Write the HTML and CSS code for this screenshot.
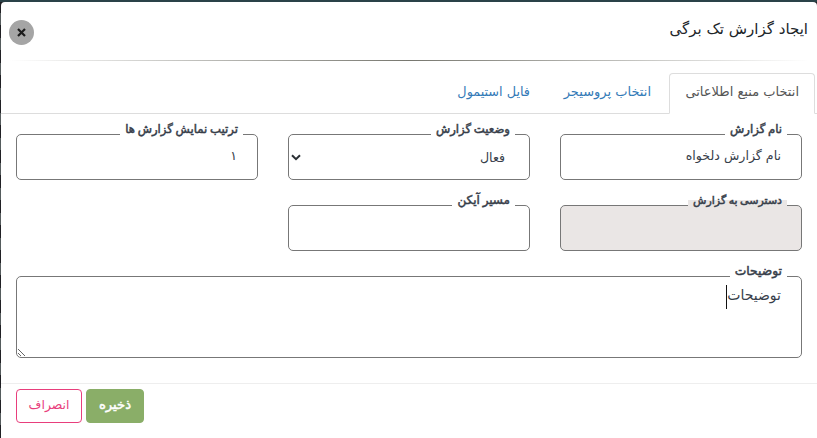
FILE: index.html
```html
<!DOCTYPE html>
<html lang="fa" dir="rtl">
<head>
    <meta charset="utf-8">
    <title>ایجاد گزارش تک برگی</title>
    <link rel="stylesheet" href="styles.css">
</head>
<body>
    <div class="modal">
        <div class="modal-header">
            <h4 class="modal-title">ایجاد گزارش تک برگی</h4>
            <button type="button" class="close" aria-label="بستن">
                <svg width="9" height="9" viewBox="0 0 9 9"><path d="M1 1L8 8M8 1L1 8" stroke="#1b1b1b" stroke-width="2.2"/></svg>
            </button>
        </div>
        <div class="line"></div>
        <ul class="tabs">
            <li><a class="tab active">انتخاب منبع اطلاعاتی</a></li>
            <li><a class="tab procedure">انتخاب پروسیجر</a></li>
            <li><a class="tab file">فایل استیمول</a></li>
        </ul>
        <form class="form">
            <div class="field">
                <input type="text" id="name" value="نام گزارش دلخواه">
                <label for="name">نام گزارش</label>
            </div>
            <div class="field">
                <select id="status">
                    <option>فعال</option>
                </select>
                <svg class="arrow" width="10" height="7" viewBox="0 0 10 7"><path d="M1 1.2L5 5.2L9 1.2" fill="none" stroke="#2b3035" stroke-width="2"/></svg>
                <label for="status">وضعیت گزارش</label>
            </div>
            <div class="field">
                <input type="text" id="order" value="۱">
                <label for="order">ترتیب نمایش گزارش ها</label>
            </div>
            <div class="field">
                <input type="text" id="access" class="disabled" readonly>
                <label for="access" class="label-disabled">دسترسی به گزارش</label>
            </div>
            <div class="field">
                <input type="text" id="icon">
                <label for="icon" class="label-icon">مسیر آیکن</label>
            </div>
            <div class="field wide">
                <textarea id="desc">توضیحات</textarea>
                <span class="caret"></span>
                <label for="desc" class="label-desc">توضیحات</label>
            </div>
        </form>
        <div class="modal-footer">
            <button type="button" class="btn save">ذخیره</button>
            <button type="button" class="btn cancel">انصراف</button>
        </div>
    </div>
</body>
</html>
```

FILE: styles.css
```css
* { box-sizing: border-box; }
body { margin: 0; padding: 2px 0 0 1px; height: 438px; overflow: hidden; background: linear-gradient(#2a4248 2px, transparent 2px), repeating-linear-gradient(#202024 0 13px, #555c5d 13px 25px); font-family: "DejaVu Sans", sans-serif; color: #373e4a; }
.modal { height: 436px; background: #fff; border-radius: 4px 4px 0 0; }

.modal-header { height: 58px; padding: 0 9px 0 8px; display: flex; justify-content: space-between; align-items: flex-start; }
.modal-title { margin: 14px 0 0; font-size: 15px; line-height: 26px; font-weight: normal; color: #212529; }
.close { width: 25px; height: 25px; margin-top: 18px; padding: 0; border: 0; border-radius: 50%; background: #a5a5a5; display: flex; align-items: center; justify-content: center; }
.line { height: 1px; background: linear-gradient(to right, #fff 1%, #77776f 50%, #fff 99%); }

.tabs { list-style: none; height: 41px; margin: 12px 0 0; padding: 0 2px 0 0; display: flex; border-bottom: 1px solid #ddd; }
.tab { display: block; height: 40px; padding: 0 15px; margin-left: 2px; font-size: 13px; line-height: 36px; color: #337ab7; border: 1px solid transparent; white-space: nowrap; }
.tab.active { width: 146px; height: 41px; color: #555; background: #fff; border-color: #ddd #ddd #fff; border-radius: 4px 4px 0 0; }
.tab.procedure { width: 119px; }
.tab.file { font-size: 12.8px; }

.form { padding: 20px 15px 0; display: grid; grid-template-columns: repeat(3, 242px); grid-template-rows: 46px 46px 82px; gap: 25px 30px; }
.field { position: relative; }
.wide { grid-column: 1 / 4; }
input, select, textarea { display: block; width: 100%; height: 100%; margin: 0; border: 1px solid #777; border-radius: 5px; background: #fff; color: #373e4a; font-family: inherit; font-size: 12.6px; outline: 0; }
input { padding: 0 20px 3px; }
select { appearance: none; padding: 0 24px 0; }
textarea { padding: 7px 20px; font-size: 14px; line-height: 23px; }
.disabled { background: #eae6e5; }
label { position: absolute; top: -13px; right: 15px; padding: 0 5px; height: 17px; line-height: 17px; font-size: 11.7px; word-spacing: -1px; -webkit-text-stroke: 0.5px #373e4a; background: #fff; white-space: nowrap; }
.label-disabled { font-size: 11px; background: linear-gradient(#fff 8px, #eae6e5 8px); }
.label-icon { font-size: 12px; }
.label-desc { font-size: 12.3px; }
.arrow { position: absolute; left: 3px; top: 20px; }
.caret { position: absolute; right: 75px; top: 9px; width: 1px; height: 24px; background: #111; }

.modal-footer { margin-top: 25px; padding: 5px 15px 0; border-top: 1px solid #eee; display: flex; justify-content: flex-end; gap: 4px; }
.btn { height: 34px; padding: 0 0 4px; border-radius: 4px; font-family: inherit; font-size: 12.4px; }
.save { width: 58px; color: #fff; background: #8aae68; border: 1px solid #8aae68; font-size: 13.2px; -webkit-text-stroke: 0.5px #fff; }
.cancel { width: 66px; color: #e83e7c; background: #fff; border: 1px solid #e83e7c; }
```
